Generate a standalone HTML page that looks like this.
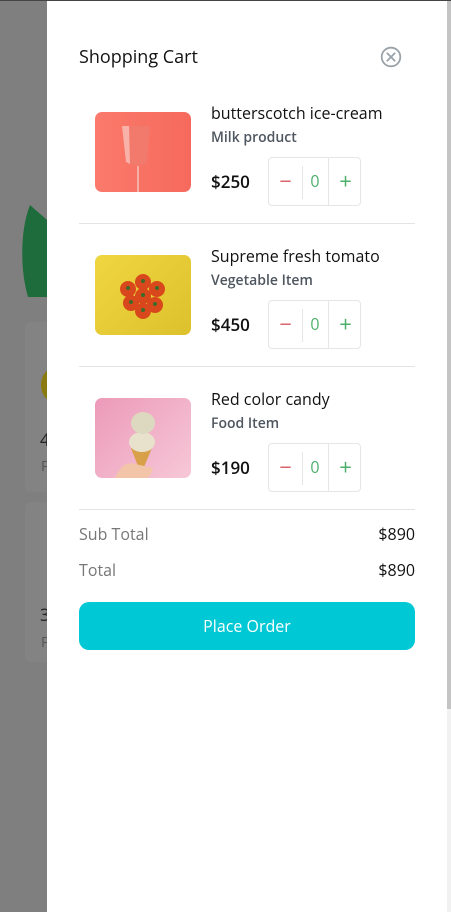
<!DOCTYPE html>
<html><head><meta charset="utf-8"><style>
*{margin:0;padding:0;box-sizing:border-box}
body{width:451px;height:912px;overflow:hidden;position:relative;background:#7f7f7f;font-family:"Open Sans","Liberation Sans",sans-serif}
.abs{position:absolute}
.panel{position:absolute;left:47px;top:1px;width:400px;height:911px;background:#fff}
.t{position:absolute;white-space:nowrap}
.img{position:absolute;left:95px;width:96px;height:80px;border-radius:7px;overflow:hidden}
.name{left:211px;font-size:16px;color:#111;font-weight:500}
.sub{left:211px;font-size:14px;color:#4e5660;font-weight:600}
.price{left:211px;font-size:17px;color:#111;font-weight:600}
.qty{position:absolute;left:268px;width:93px;height:49px;border:1px solid #e6e6e6;border-radius:4px}
.qty .a{position:absolute;top:0;width:33px;height:47px;line-height:47px;text-align:center;font-size:22px}
.hr{position:absolute;left:79px;width:336px;height:1px;background:#e4e4e4}
</style></head><body>
<div class="abs" style="left:0;top:0;width:451px;height:1px;background:#444"></div>
<svg class="abs" style="left:20px;top:200px" width="30" height="100"><path d="M10 5 C0 30 0 70 8 97 L27 97 L27 20 Z" fill="#1e6b3b"/></svg>
<div class="abs" style="left:25px;top:322px;width:30px;height:170px;background:#838383;border-radius:6px"></div>
<div class="abs" style="left:41px;top:367px;width:30px;height:36px;border-radius:50%;background:#8a7a10"></div>
<div class="t" style="left:40px;top:428px;font-size:17px;color:#222">4</div>
<div class="t" style="left:41px;top:457px;font-size:14px;color:#555">F</div>
<div class="abs" style="left:25px;top:502px;width:30px;height:160px;background:#838383;border-radius:6px"></div>
<div class="t" style="left:40px;top:603px;font-size:17px;color:#222">3</div>
<div class="t" style="left:41px;top:633px;font-size:14px;color:#555">F</div>

<div class="panel"></div>
<div class="abs" style="left:447px;top:1px;width:4px;height:708px;background:#c4c4c4"></div>
<div class="abs" style="left:447px;top:709px;width:4px;height:203px;background:#f1f1f1"></div>

<div class="t" style="left:79px;top:45px;font-size:18px;color:#111;font-weight:500">Shopping Cart</div>
<svg class="abs" style="left:380px;top:46px" width="22" height="22" viewBox="0 0 22 22"><circle cx="11" cy="11" r="9.3" fill="none" stroke="#9aa3aa" stroke-width="1.8"/><path d="M7.3 7.3L14.7 14.7M14.7 7.3L7.3 14.7" stroke="#9aa3aa" stroke-width="1.8" stroke-linecap="round"/></svg>

<div class="img" style="top:112px;background:linear-gradient(90deg,#fb7a6b,#f56a5c)">
<svg width="96" height="80"><path d="M26 14 L55 14 L52 50 Q44 56 33 52 L30 28 Z" fill="#f27a6d"/><path d="M27 14 L34 14 L35 52 L31 50 Z" fill="#f9b2a8"/><rect x="42" y="54" width="2" height="26" fill="#f4b0a6"/></svg></div>
<div class="t name" style="top:102px">butterscotch ice-cream</div>
<div class="t sub" style="top:128px">Milk product</div>
<div class="t price" style="top:170px">$250</div>
<div class="qty" style="top:157px"><div class="a" style="left:0;color:#d9606a">−</div><div class="abs" style="left:33px;top:8px;width:1px;height:33px;background:#e6e6e6"></div><div class="a" style="left:33px;width:26px;font-size:16px;color:#4caf6a">0</div><div class="abs" style="left:59px;top:0;width:1px;height:47px;background:#e6e6e6"></div><div class="a" style="left:60px;color:#4caf6a">+</div></div>
<div class="hr" style="top:223px"></div>

<div class="img" style="top:255px;background:linear-gradient(135deg,#f0d640,#dcc12c)">
<svg width="96" height="80"><g fill="#d9471c"><circle cx="48" cy="27" r="8"/><circle cx="62" cy="34" r="8"/><circle cx="33" cy="34" r="8"/><circle cx="48" cy="41" r="8"/><circle cx="36" cy="48" r="8"/><circle cx="60" cy="50" r="8"/><circle cx="48" cy="56" r="8"/></g><g fill="#3d6b2a"><circle cx="48" cy="26" r="2"/><circle cx="62" cy="33" r="2"/><circle cx="33" cy="33" r="2"/><circle cx="48" cy="40" r="2"/><circle cx="36" cy="47" r="2"/><circle cx="60" cy="49" r="2"/><circle cx="48" cy="55" r="2"/></g></svg></div>
<div class="t name" style="top:245px">Supreme fresh tomato</div>
<div class="t sub" style="top:271px">Vegetable Item</div>
<div class="t price" style="top:313px">$450</div>
<div class="qty" style="top:300px"><div class="a" style="left:0;color:#d9606a">−</div><div class="abs" style="left:33px;top:8px;width:1px;height:33px;background:#e6e6e6"></div><div class="a" style="left:33px;width:26px;font-size:16px;color:#4caf6a">0</div><div class="abs" style="left:59px;top:0;width:1px;height:47px;background:#e6e6e6"></div><div class="a" style="left:60px;color:#4caf6a">+</div></div>
<div class="hr" style="top:366px"></div>

<div class="img" style="top:398px;background:linear-gradient(135deg,#ec9ab8,#f6c8d8)">
<svg width="96" height="80"><path d="M36 50 L46 76 L57 50 Z" fill="#d9a04a"/><ellipse cx="47" cy="44" rx="13" ry="10" fill="#e8e2cc"/><ellipse cx="48" cy="25" rx="12" ry="11" fill="#ddd8c0"/><path d="M20 80 Q28 62 40 66 L58 70 Q56 78 52 80 Z" fill="#f2c4a8"/></svg></div>
<div class="t name" style="top:388px">Red color candy</div>
<div class="t sub" style="top:414px">Food Item</div>
<div class="t price" style="top:456px">$190</div>
<div class="qty" style="top:443px"><div class="a" style="left:0;color:#d9606a">−</div><div class="abs" style="left:33px;top:8px;width:1px;height:33px;background:#e6e6e6"></div><div class="a" style="left:33px;width:26px;font-size:16px;color:#4caf6a">0</div><div class="abs" style="left:59px;top:0;width:1px;height:47px;background:#e6e6e6"></div><div class="a" style="left:60px;color:#4caf6a">+</div></div>
<div class="hr" style="top:509px"></div>

<div class="t" style="left:79px;top:523px;font-size:16px;color:#777">Sub Total</div>
<div class="t" style="right:36px;top:523px;font-size:16px;color:#111;font-weight:500">$890</div>
<div class="t" style="left:79px;top:559px;font-size:16px;color:#777">Total</div>
<div class="t" style="right:36px;top:559px;font-size:16px;color:#111;font-weight:500">$890</div>

<div class="abs" style="left:79px;top:602px;width:336px;height:48px;border-radius:10px;background:#00c8d4;color:#fff;font-size:16px;font-weight:500;text-align:center;line-height:48px">Place Order</div>
</body></html>
